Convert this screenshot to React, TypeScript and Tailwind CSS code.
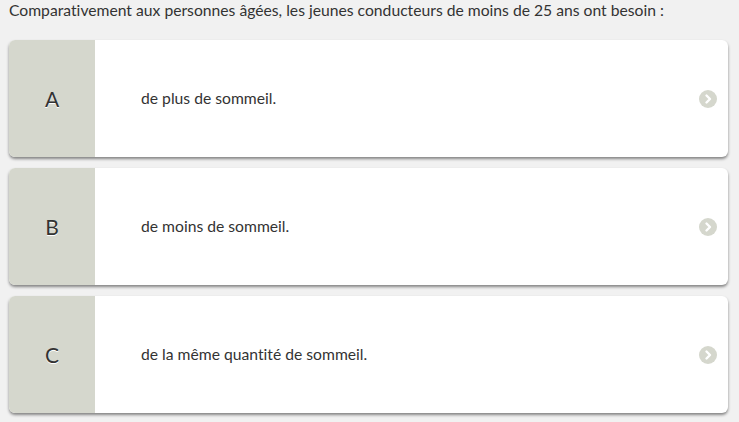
import React from "react";

const options = [
  { letter: "A", text: "de plus de sommeil." },
  { letter: "B", text: "de moins de sommeil." },
  { letter: "C", text: "de la même quantité de sommeil." },
];

function Chevron() {
  return (
    <svg width="18" height="18" viewBox="0 0 18 18">
      <circle cx="9" cy="9" r="9" fill="#d5d7cd" />
      <path d="M7.5 5.5 L11 9 L7.5 12.5" stroke="#fff" strokeWidth="2.4" fill="none" strokeLinecap="round" strokeLinejoin="round" />
    </svg>
  );
}

export default function App() {
  return (
    <div
      className="w-[739px] h-[422px] bg-[#f1f1f1] pl-[9px] pr-[11px] overflow-hidden"
      style={{ fontFamily: "Lato, 'Open Sans', sans-serif", fontVariantLigatures: "none" }}
    >
      <div className="pt-[0px] h-[40px] text-[15.7px] leading-[20px] text-[#333]">
        Comparativement aux personnes âgées, les jeunes conducteurs de moins de 25 ans ont besoin :
      </div>
      <div className="flex flex-col gap-[11px]">
        {options.map((o) => (
          <div
            key={o.letter}
            className="flex h-[117px] bg-white rounded-[6px] overflow-hidden shadow-[0_2px_3px_rgba(0,0,0,0.45)]"
          >
            <div className="w-[86px] bg-[#d5d7cd] flex items-center justify-center text-[21px] text-[#333] [text-shadow:0_1px_0_#fff]">
              {o.letter}
            </div>
            <div className="flex-1 flex items-center pl-[46px] text-[15.7px] text-[#333]">
              {o.text}
            </div>
            <div className="flex items-center pr-[11px]">
              <Chevron />
            </div>
          </div>
        ))}
      </div>
    </div>
  );
}
